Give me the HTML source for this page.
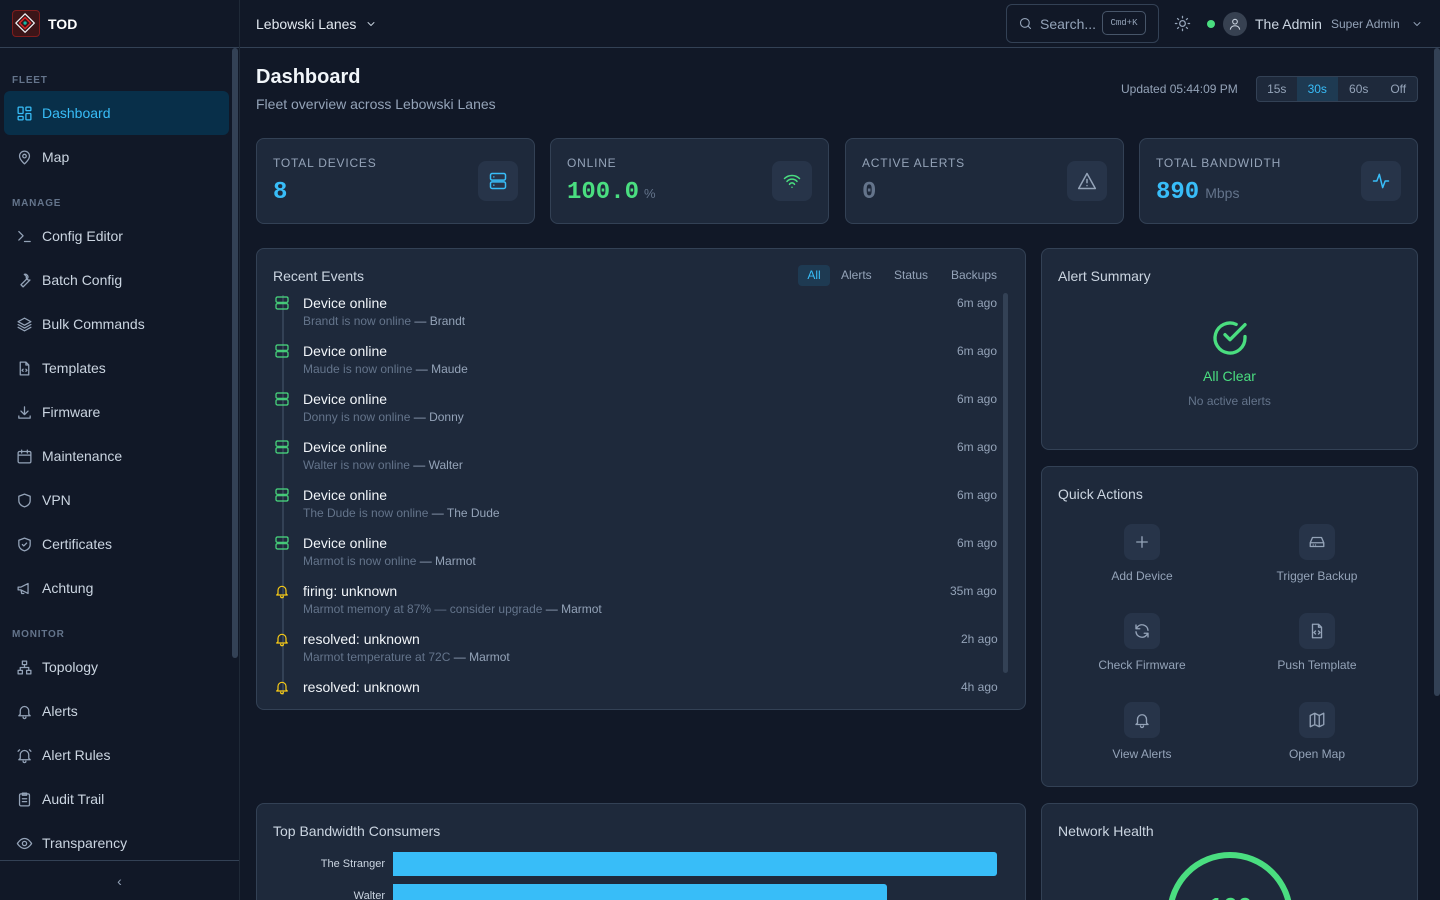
<!DOCTYPE html>
<html style="overflow:hidden;width:1440px;height:900px"><head><meta charset="utf-8"><style>
*{box-sizing:border-box;margin:0;padding:0}
body{width:1440px;height:900px;overflow:hidden;background:#111827;font-family:"Liberation Sans",sans-serif;color:#e2e8f0;position:relative}
.a{position:absolute}
svg{fill:none;stroke:currentColor;stroke-width:1.8;stroke-linecap:round;stroke-linejoin:round}
.side{left:0;top:0;width:240px;height:900px;border-right:1px solid #1f2937;background:#111827}
.nav{position:absolute;left:4px;width:225px;height:44px;display:flex;align-items:center;padding-left:12px;font-size:14px;color:#cbd5e1;border-radius:6px}
.nav svg{width:17px;height:17px;margin-right:9px;color:#94a3b8}
.sec{position:absolute;left:12px;font-size:10px;font-weight:bold;letter-spacing:.8px;color:#64748b}
.card{position:absolute;background:#1e293b;border:1px solid #334155;border-radius:8px}
.lbl{font-size:12px;letter-spacing:.8px;color:#94a3b8;position:absolute;left:16px;top:17px}
.big{position:absolute;left:16px;top:40px;font-family:"Liberation Mono",monospace;font-weight:bold;font-size:24px}
.ib{position:absolute;right:16px;top:22px;width:40px;height:40px;border-radius:8px;background:#273449;display:flex;align-items:center;justify-content:center}
.ib svg{width:20px;height:20px}
.ev{position:absolute;font-size:14px;color:#f1f5f9;white-space:nowrap}
.ev small{display:block;font-size:12px;color:#64748b;margin-top:3px}
.ev small b{font-weight:normal;color:#94a3b8}
.tm{position:absolute;font-size:12px;color:#94a3b8;white-space:nowrap}
.qa{position:absolute;width:160px;text-align:center;font-size:12px;color:#94a3b8}
.qa div{width:36px;height:36px;margin:0 auto 9px;background:#273449;border-radius:8px;display:flex;align-items:center;justify-content:center}
.qa svg{width:18px;height:18px}
</style></head><body>
<div class="a side">
 <div class="a" style="left:0;top:0;width:239px;height:48px;border-bottom:1px solid #334155"></div>
 <div class="a" style="left:12px;top:10px;width:28px;height:27px;border-radius:4px;background:#3b1518;border:1px solid #7f1d1d"><svg viewBox="0 0 28 27" style="width:26px;height:25px"><path d="M13 3l10 10-10 10L3 13z" stroke="#f1f5f9" stroke-width="1.3"/><path d="M13 7l6 6-6 6-6-6z" stroke="#dc2626" stroke-width="1.5"/><circle cx="13" cy="13" r="1.8" fill="#14b8a6" stroke="none"/></svg></div>
 <div class="a" style="left:48px;top:16px;font-size:14px;font-weight:bold;color:#fff">TOD</div>
 <div class="a" style="left:232px;top:48px;width:6px;height:610px;background:#334155;border-radius:3px"></div>
 <div class="sec" style="top:75px">FLEET</div>
 <div class="nav" style="top:91px;background:#082f49;color:#38bdf8"><svg viewBox="0 0 24 24" style="color:#38bdf8"><rect x="3" y="3" width="7" height="9" rx="1"/><rect x="14" y="3" width="7" height="5" rx="1"/><rect x="14" y="12" width="7" height="9" rx="1"/><rect x="3" y="16" width="7" height="5" rx="1"/></svg>Dashboard</div>
 <div class="nav" style="top:135px"><svg viewBox="0 0 24 24"><path d="M12 21s-7-6-7-11a7 7 0 0114 0c0 5-7 11-7 11z"/><circle cx="12" cy="10" r="2.5"/></svg>Map</div>
 <div class="sec" style="top:198px">MANAGE</div>
 <div class="nav" style="top:214px"><svg viewBox="0 0 24 24"><path d="M4 17l6-6-6-6M12 19h8"/></svg>Config Editor</div>
 <div class="nav" style="top:258px"><svg viewBox="0 0 24 24"><path d="M14.7 6.3a4 4 0 005 5L14 17l-4 4-3-3 4-4 5.7-5.7a4 4 0 00-5-5z"/></svg>Batch Config</div>
 <div class="nav" style="top:302px"><svg viewBox="0 0 24 24"><path d="M12 3l9 5-9 5-9-5zM3 12l9 5 9-5M3 16l9 5 9-5"/></svg>Bulk Commands</div>
 <div class="nav" style="top:346px"><svg viewBox="0 0 24 24"><path d="M14 3H6v18h12V7zM14 3v4h4M10 13l-1.5 1.5L10 16M14 13l1.5 1.5L14 16"/></svg>Templates</div>
 <div class="nav" style="top:390px"><svg viewBox="0 0 24 24"><path d="M12 4v11M7 10l5 5 5-5M4 17v3h16v-3"/></svg>Firmware</div>
 <div class="nav" style="top:434px"><svg viewBox="0 0 24 24"><rect x="3" y="5" width="18" height="16" rx="2"/><path d="M3 10h18M8 3v4M16 3v4"/></svg>Maintenance</div>
 <div class="nav" style="top:478px"><svg viewBox="0 0 24 24"><path d="M12 3l8 3v6c0 5-4 8-8 9-4-1-8-4-8-9V6z"/></svg>VPN</div>
 <div class="nav" style="top:522px"><svg viewBox="0 0 24 24"><path d="M12 3l8 3v6c0 5-4 8-8 9-4-1-8-4-8-9V6z"/><path d="M9 12l2 2 4-4"/></svg>Certificates</div>
 <div class="nav" style="top:566px"><svg viewBox="0 0 24 24"><path d="M3 10v4h4l10 5V5L7 10zM7 14l1 5h3"/></svg>Achtung</div>
 <div class="sec" style="top:629px">MONITOR</div>
 <div class="nav" style="top:645px"><svg viewBox="0 0 24 24"><rect x="9" y="3" width="6" height="5"/><rect x="3" y="16" width="6" height="5"/><rect x="15" y="16" width="6" height="5"/><path d="M12 8v4M6 16v-4h12v4"/></svg>Topology</div>
 <div class="nav" style="top:689px"><svg viewBox="0 0 24 24"><path d="M6 16V11a6 6 0 0112 0v5l2 2H4zM10 20a2 2 0 004 0"/></svg>Alerts</div>
 <div class="nav" style="top:733px"><svg viewBox="0 0 24 24"><path d="M6 16V11a6 6 0 0112 0v5l2 2H4zM10 20a2 2 0 004 0M3 6l2-2M21 6l-2-2"/></svg>Alert Rules</div>
 <div class="nav" style="top:777px"><svg viewBox="0 0 24 24"><rect x="5" y="4" width="14" height="17" rx="2"/><path d="M9 3h6v3H9zM9 11h6M9 15h6"/></svg>Audit Trail</div>
 <div class="nav" style="top:821px"><svg viewBox="0 0 24 24"><path d="M2 12s4-7 10-7 10 7 10 7-4 7-10 7S2 12 2 12z"/><circle cx="12" cy="12" r="3"/></svg>Transparency</div>
 <div class="a" style="left:0;top:860px;width:239px;height:40px;border-top:1px solid #334155;background:#111827;text-align:center;color:#94a3b8;font-size:14px;line-height:40px">‹</div>
</div>
<div class="a" style="left:240px;top:0;width:1200px;height:48px;border-bottom:1px solid #334155"></div>
<div class="a" style="left:256px;top:16px;font-size:14px;color:#e2e8f0">Lebowski Lanes</div>
<svg class="a" viewBox="0 0 24 24" style="left:365px;top:18px;width:12px;height:12px;color:#cbd5e1"><path d="M6 9l6 6 6-6"/></svg>
<div class="a" style="left:1006px;top:4px;width:153px;height:39px;border:1px solid #334155;border-radius:6px"></div>
<svg class="a" viewBox="0 0 24 24" style="left:1018px;top:16px;width:15px;height:15px;color:#94a3b8"><circle cx="11" cy="11" r="7"/><path d="M20 20l-4-4"/></svg>
<div class="a" style="left:1040px;top:16px;font-size:14px;color:#94a3b8">Search...</div>
<div class="a" style="left:1102px;top:11px;width:44px;height:24px;border:1px solid #475569;border-radius:5px;font-size:9px;color:#94a3b8;text-align:center;line-height:22px;font-family:'Liberation Mono',monospace">Cmd+K</div>
<svg class="a" viewBox="0 0 24 24" style="left:1174px;top:15px;width:17px;height:17px;color:#94a3b8"><circle cx="12" cy="12" r="4"/><path d="M12 2v2M12 20v2M2 12h2M20 12h2M5 5l1.5 1.5M17.5 17.5L19 19M5 19l1.5-1.5M17.5 6.5L19 5"/></svg>
<div class="a" style="left:1207px;top:20px;width:8px;height:8px;border-radius:50%;background:#4ade80"></div>
<div class="a" style="left:1223px;top:12px;width:24px;height:24px;border-radius:50%;background:#374151"><svg viewBox="0 0 24 24" style="width:14px;height:14px;margin:5px;color:#cbd5e1"><circle cx="12" cy="8" r="4"/><path d="M4 21c1-4 4-6 8-6s7 2 8 6"/></svg></div>
<div class="a" style="left:1255px;top:16px;font-size:14px;color:#cbd5e1">The Admin</div>
<div class="a" style="left:1331px;top:17px;font-size:12px;color:#94a3b8">Super Admin</div>
<svg class="a" viewBox="0 0 24 24" style="left:1411px;top:18px;width:12px;height:12px;color:#94a3b8"><path d="M6 9l6 6 6-6"/></svg>
<div class="a" style="left:1434px;top:48px;width:6px;height:648px;background:#334155;border-radius:3px"></div>
<div class="a" style="left:256px;top:66px;font-size:20px;font-weight:bold;color:#f1f5f9">Dashboard</div>
<div class="a" style="left:256px;top:96px;font-size:14px;color:#94a3b8">Fleet overview across Lebowski Lanes</div>
<div class="a" style="left:1121px;top:82px;font-size:12px;color:#94a3b8">Updated 05:44:09 PM</div>
<div class="a" style="left:1256px;top:76px;width:162px;height:26px;border:1px solid #334155;border-radius:4px;background:#1e293b;display:flex;font-size:12px;color:#94a3b8;line-height:24px;overflow:hidden">
 <span style="width:40px;text-align:center">15s</span><span style="width:42px;text-align:center;background:#1e3a52;color:#38bdf8">30s</span><span style="width:42px;text-align:center">60s</span><span style="width:38px;text-align:center">Off</span></div>
<div class="card" style="left:256px;top:138px;width:279px;height:86px"><div class="lbl">TOTAL DEVICES</div><div class="big" style="color:#38bdf8">8</div><div class="ib"><svg viewBox="0 0 24 24" style="color:#38bdf8"><rect x="3" y="3" width="18" height="8" rx="2"/><rect x="3" y="13" width="18" height="8" rx="2"/><path d="M7 7h.01M7 17h.01"/></svg></div></div>
<div class="card" style="left:550px;top:138px;width:279px;height:86px"><div class="lbl">ONLINE</div><div class="big" style="color:#4ade80">100.0<span style="font-family:'Liberation Sans';font-weight:normal;font-size:13px;color:#64748b;margin-left:5px">%</span></div><div class="ib"><svg viewBox="0 0 24 24" style="color:#4ade80"><path d="M3 9a13 13 0 0118 0M6 12.5a8 8 0 0112 0M9 16a3.5 3.5 0 016 0M12 19.5h.01"/></svg></div></div>
<div class="card" style="left:845px;top:138px;width:279px;height:86px"><div class="lbl">ACTIVE ALERTS</div><div class="big" style="color:#64748b">0</div><div class="ib"><svg viewBox="0 0 24 24" style="color:#94a3b8"><path d="M12 3l10 18H2zM12 10v4M12 17.5h.01"/></svg></div></div>
<div class="card" style="left:1139px;top:138px;width:279px;height:86px"><div class="lbl">TOTAL BANDWIDTH</div><div class="big" style="color:#38bdf8">890<span style="font-family:'Liberation Sans';font-weight:normal;font-size:14px;color:#64748b;margin-left:6px">Mbps</span></div><div class="ib"><svg viewBox="0 0 24 24" style="color:#38bdf8"><path d="M3 12h4l3-8 4 16 3-8h4"/></svg></div></div>
<div class="card" style="left:256px;top:248px;width:770px;height:462px;overflow:hidden">
 <div class="a" style="left:16px;top:19px;font-size:14px;color:#cbd5e1">Recent Events</div>
 <div class="a" style="left:541px;top:16px;width:32px;height:21px;background:#1e3a52;border-radius:4px;font-size:12px;color:#38bdf8;text-align:center;line-height:21px">All</div>
 <div class="a" style="left:584px;top:19px;font-size:12px;color:#94a3b8">Alerts</div>
 <div class="a" style="left:637px;top:19px;font-size:12px;color:#94a3b8">Status</div>
 <div class="a" style="left:694px;top:19px;font-size:12px;color:#94a3b8">Backups</div>
 <div class="a" style="left:746px;top:44px;width:5px;height:380px;background:#334155;border-radius:3px"></div>
 <div class="a" style="left:25px;top:46px;width:2px;height:400px;background:#334155"></div>
</div>
<div class="card" style="left:1041px;top:248px;width:377px;height:202px">
 <div class="a" style="left:16px;top:19px;font-size:14px;color:#cbd5e1">Alert Summary</div>
 <svg class="a" viewBox="0 0 24 24" style="left:168px;top:69px;width:40px;height:40px;color:#4ade80;stroke-width:2"><path d="M21 11.1V12a9 9 0 11-5.3-8.2"/><path d="M21 4L12 13l-3-3"/></svg>
 <div class="a" style="left:0;width:375px;top:119px;text-align:center;font-size:14px;color:#4ade80">All Clear</div>
 <div class="a" style="left:0;width:375px;top:145px;text-align:center;font-size:12px;color:#64748b">No active alerts</div>
</div>
<div class="card" style="left:1041px;top:466px;width:377px;height:321px">
 <div class="a" style="left:16px;top:19px;font-size:14px;color:#cbd5e1">Quick Actions</div>
 <div class="qa" style="left:20px;top:57px"><div><svg viewBox="0 0 24 24"><path d="M12 5v14M5 12h14"/></svg></div>Add Device</div>
 <div class="qa" style="left:195px;top:57px"><div><svg viewBox="0 0 24 24"><path d="M3 13l3-7h12l3 7v5H3zM3 13h18M7 16h.01M10 16h.01"/></svg></div>Trigger Backup</div>
 <div class="qa" style="left:20px;top:146px"><div><svg viewBox="0 0 24 24"><path d="M20 11a8 8 0 00-14-4.5L4 9M4 4v5h5M4 13a8 8 0 0014 4.5l2-2.5M20 20v-5h-5"/></svg></div>Check Firmware</div>
 <div class="qa" style="left:195px;top:146px"><div><svg viewBox="0 0 24 24"><path d="M14 3H6v18h12V7zM14 3v4h4M10 12l-2 2 2 2M14 12l2 2-2 2"/></svg></div>Push Template</div>
 <div class="qa" style="left:20px;top:235px"><div><svg viewBox="0 0 24 24"><path d="M6 16V11a6 6 0 0112 0v5l2 2H4zM10 20a2 2 0 004 0"/></svg></div>View Alerts</div>
 <div class="qa" style="left:195px;top:235px"><div><svg viewBox="0 0 24 24"><path d="M3 6l6-3 6 3 6-3v15l-6 3-6-3-6 3zM9 3v15M15 6v15"/></svg></div>Open Map</div>
</div>
<div class="card" style="left:256px;top:803px;width:770px;height:110px;overflow:hidden">
 <div class="a" style="left:16px;top:19px;font-size:14px;color:#cbd5e1">Top Bandwidth Consumers</div>
 <div class="a" style="left:0;width:128px;top:54px;text-align:right;font-size:11px;color:#cbd5e1">The Stranger</div>
 <div class="a" style="left:136px;top:48px;width:604px;height:24px;background:#38bdf8;border-radius:0 3px 3px 0"></div>
 <div class="a" style="left:0;width:128px;top:86px;text-align:right;font-size:11px;color:#cbd5e1">Walter</div>
 <div class="a" style="left:136px;top:80px;width:494px;height:24px;background:#38bdf8;border-radius:0 3px 3px 0"></div>
</div>
<div class="card" style="left:1041px;top:803px;width:377px;height:110px;overflow:hidden">
 <div class="a" style="left:16px;top:19px;font-size:14px;color:#cbd5e1">Network Health</div>
 <div class="a" style="left:125px;top:48px;width:126px;height:126px;border-radius:50%;border:6px solid #4ade80"></div>
 <div class="a" style="left:0;width:377px;top:88px;text-align:center;font-size:26px;font-weight:bold;color:#4ade80">100</div>
</div>
<svg class="a" viewBox="0 0 24 24" style="left:274px;top:295px;width:16px;height:16px;color:#4ade80"><rect x="3" y="3" width="18" height="8" rx="2"/><rect x="3" y="13" width="18" height="8" rx="2"/></svg>
<div class="ev" style="left:303px;top:295px">Device online<small>Brandt is now online <b>— Brandt</b></small></div><div class="tm" style="left:957px;top:296px">6m ago</div>
<svg class="a" viewBox="0 0 24 24" style="left:274px;top:343px;width:16px;height:16px;color:#4ade80"><rect x="3" y="3" width="18" height="8" rx="2"/><rect x="3" y="13" width="18" height="8" rx="2"/></svg>
<div class="ev" style="left:303px;top:343px">Device online<small>Maude is now online <b>— Maude</b></small></div><div class="tm" style="left:957px;top:344px">6m ago</div>
<svg class="a" viewBox="0 0 24 24" style="left:274px;top:391px;width:16px;height:16px;color:#4ade80"><rect x="3" y="3" width="18" height="8" rx="2"/><rect x="3" y="13" width="18" height="8" rx="2"/></svg>
<div class="ev" style="left:303px;top:391px">Device online<small>Donny is now online <b>— Donny</b></small></div><div class="tm" style="left:957px;top:392px">6m ago</div>
<svg class="a" viewBox="0 0 24 24" style="left:274px;top:439px;width:16px;height:16px;color:#4ade80"><rect x="3" y="3" width="18" height="8" rx="2"/><rect x="3" y="13" width="18" height="8" rx="2"/></svg>
<div class="ev" style="left:303px;top:439px">Device online<small>Walter is now online <b>— Walter</b></small></div><div class="tm" style="left:957px;top:440px">6m ago</div>
<svg class="a" viewBox="0 0 24 24" style="left:274px;top:487px;width:16px;height:16px;color:#4ade80"><rect x="3" y="3" width="18" height="8" rx="2"/><rect x="3" y="13" width="18" height="8" rx="2"/></svg>
<div class="ev" style="left:303px;top:487px">Device online<small>The Dude is now online <b>— The Dude</b></small></div><div class="tm" style="left:957px;top:488px">6m ago</div>
<svg class="a" viewBox="0 0 24 24" style="left:274px;top:535px;width:16px;height:16px;color:#4ade80"><rect x="3" y="3" width="18" height="8" rx="2"/><rect x="3" y="13" width="18" height="8" rx="2"/></svg>
<div class="ev" style="left:303px;top:535px">Device online<small>Marmot is now online <b>— Marmot</b></small></div><div class="tm" style="left:957px;top:536px">6m ago</div>
<svg class="a" viewBox="0 0 24 24" style="left:274px;top:583px;width:16px;height:16px;color:#facc15"><path d="M6 16V11a6 6 0 0112 0v5l2 2H4zM10 20a2 2 0 004 0"/></svg>
<div class="ev" style="left:303px;top:583px">firing: unknown<small>Marmot memory at 87% — consider upgrade <b>— Marmot</b></small></div><div class="tm" style="left:950px;top:584px">35m ago</div>
<svg class="a" viewBox="0 0 24 24" style="left:274px;top:631px;width:16px;height:16px;color:#facc15"><path d="M6 16V11a6 6 0 0112 0v5l2 2H4zM10 20a2 2 0 004 0"/></svg>
<div class="ev" style="left:303px;top:631px">resolved: unknown<small>Marmot temperature at 72C <b>— Marmot</b></small></div><div class="tm" style="left:961px;top:632px">2h ago</div>
<svg class="a" viewBox="0 0 24 24" style="left:274px;top:679px;width:16px;height:16px;color:#facc15"><path d="M6 16V11a6 6 0 0112 0v5l2 2H4zM10 20a2 2 0 004 0"/></svg>
<div class="ev" style="left:303px;top:679px">resolved: unknown</div><div class="tm" style="left:961px;top:680px">4h ago</div>
</body></html>
